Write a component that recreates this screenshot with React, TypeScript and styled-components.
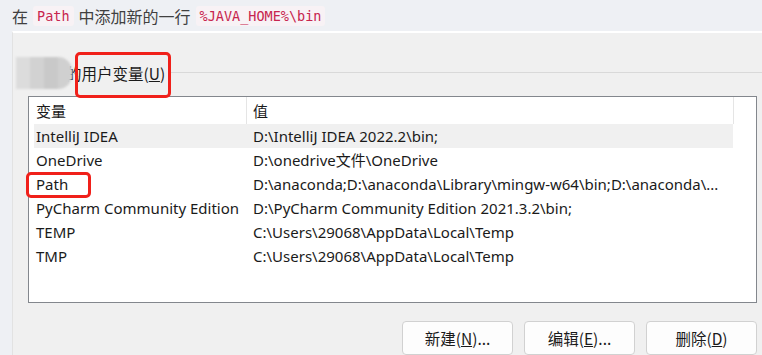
import React, { FC } from "react";
import styled, { createGlobalStyle } from "styled-components";

interface EnvVar {
  name: string;
  value: string;
  marked?: boolean;
}

const vars: EnvVar[] = [
  { name: "IntelliJ IDEA", value: "D:\\IntelliJ IDEA 2022.2\\bin;" },
  { name: "OneDrive", value: "D:\\onedrive文件\\OneDrive" },
  {
    name: "Path",
    value: "D:\\anaconda;D:\\anaconda\\Library\\mingw-w64\\bin;D:\\anaconda\\...",
    marked: true,
  },
  { name: "PyCharm Community Edition", value: "D:\\PyCharm Community Edition 2021.3.2\\bin;" },
  { name: "TEMP", value: "C:\\Users\\29068\\AppData\\Local\\Temp" },
  { name: "TMP", value: "C:\\Users\\29068\\AppData\\Local\\Temp" },
];

const App: FC = () => {
  return (
    <>
      <GlobalStyle />
      <Page>
        <Caption>
          在<Code>Path</Code>中添加新的一行<Code>%JAVA_HOME%\bin</Code>
        </Caption>
        <Shot>
          <TabRow>
            <Mosaic>
              <Tile $c="#dcdcdc" />
              <Tile $c="#d2d2d2" />
              <Tile $c="#c9c9c9" />
              <Tile $c="#d0d0d0" $end />
            </Mosaic>
            <TabLabel>
              的用户变量(<u>U</u>)
              <RedBox $left={9} $top={-10} $w={96} $h={46} />
            </TabLabel>
            <TabLine />
          </TabRow>

          <ListBox>
            <Header>
              <HeadCell>变量</HeadCell>
              <HeadSep />
              <HeadCell $second>值</HeadCell>
              <HeadSep />
            </Header>
            <Rows>
              {vars.map((v, i) => (
                <Row key={v.name} $selected={i === 0}>
                  <Cell>
                    {v.name}
                    {v.marked && <RedBox $left={-8} $top={0} $w={65} $h={26} />}
                  </Cell>
                  <Cell $second>{v.value}</Cell>
                </Row>
              ))}
            </Rows>
          </ListBox>

          <Buttons>
            <Button>
              新建(<u>N</u>)...
            </Button>
            <Button>
              编辑(<u>E</u>)...
            </Button>
            <Button>
              删除(<u>D</u>)
            </Button>
          </Buttons>
        </Shot>
      </Page>
    </>
  );
};

export default App;

//---------------------------------styled component-----------------------------------
const GlobalStyle = createGlobalStyle`
  body {
    margin: 0;
    background: #eef0f4;
    overflow: hidden;
  }
`;

const Page = styled.div`
  width: 762px;
  height: 355px;
  overflow: hidden;
  display: flex;
  flex-direction: column;
  font-family: "Segoe UI", "Noto Sans", "Noto Sans CJK SC", sans-serif;
`;

const Caption = styled.div`
  height: 32px;
  display: flex;
  align-items: center;
  gap: 5px;
  padding: 0 0 0 12px;
  font-size: 16px;
  color: #404040;
  font-family: "Noto Sans CJK SC", sans-serif;
`;

const Code = styled.code`
  font-family: "DejaVu Sans Mono", "Liberation Mono", monospace;
  font-size: 13.5px;
  color: #c7254e;
  background: #f8f2f5;
  padding: 2px 4px;
  border-radius: 3px;
  line-height: 16px;
`;

const Shot = styled.div`
  flex: 1;
  margin-left: 12px;
  border-top: 2px solid #ffffff;
  border-left: 1px solid #e2e2e2;
  background: #f0f0f0;
  display: flex;
  flex-direction: column;
`;

const TabRow = styled.div`
  display: flex;
  align-items: center;
  height: 32px;
  margin: 24px 0 7px 3px;
`;

const Mosaic = styled.div`
  display: flex;
  height: 32px;
  width: 56px;
  margin-right: -6px;
  position: relative;
  z-index: 1;
  filter: blur(1px);
`;

const Tile = styled.div<{ $c: string; $end?: boolean }>`
  flex: 1;
  background: ${(p) => p.$c};
  border-radius: ${(p) => (p.$end ? "0 14px 14px 0" : "0")};
`;

const TabLabel = styled.span`
  position: relative;
  font-size: 15.5px;
  color: #1a1a1a;
  font-family: "Noto Sans CJK SC", sans-serif;
  padding-right: 4px;
`;

const TabLine = styled.div`
  flex: 1;
  height: 1px;
  background: #d9d9d9;
  margin-top: -2px;
`;

const RedBox = styled.div<{ $left: number; $top: number; $w: number; $h: number }>`
  position: absolute;
  left: ${(p) => p.$left}px;
  top: ${(p) => p.$top}px;
  width: ${(p) => p.$w}px;
  height: ${(p) => p.$h}px;
  box-sizing: border-box;
  border: 3px solid #f0201a;
  border-radius: 5px;
  pointer-events: none;
`;

const ListBox = styled.div`
  margin-left: 15px;
  width: 727px;
  height: 205px;
  border: 1px solid #83878d;
  background: #ffffff;
  display: flex;
  flex-direction: column;
`;

const Header = styled.div`
  display: grid;
  grid-template-columns: 217px 1px 486px 1px;
  height: 27px;
  align-items: center;
`;

const HeadCell = styled.div<{ $second?: boolean }>`
  padding-left: ${(p) => (p.$second ? 6 : 7)}px;
  font-size: 15px;
  color: #1a1a1a;
  font-family: "Noto Sans CJK SC", sans-serif;
`;

const HeadSep = styled.div`
  height: 27px;
  background: #e5e5e5;
`;

const Rows = styled.div`
  display: flex;
  flex-direction: column;
  margin-left: 5px;
  width: 699px;
`;

const Row = styled.div<{ $selected?: boolean }>`
  display: grid;
  grid-template-columns: 212px 1fr;
  height: 24px;
  align-items: center;
  background: ${(p) => (p.$selected ? "#f0f0f0" : "transparent")};
`;

const Cell = styled.div<{ $second?: boolean }>`
  position: relative;
  height: 24px;
  line-height: 24px;
  padding-left: ${(p) => (p.$second ? 7 : 2)}px;
  font-size: 15px;
  color: #1a1a1a;
  white-space: nowrap;
  overflow: ${(p) => (p.$second ? "hidden" : "visible")};
`;

const Buttons = styled.div`
  display: flex;
  justify-content: flex-end;
  gap: 11px;
  margin: 18px 5px 0 0;
`;

const Button = styled.button`
  width: 111px;
  height: 34px;
  border: 1px solid #d1d1d1;
  border-radius: 4px;
  background: #fdfdfd;
  font-size: 15.5px;
  color: #1a1a1a;
  font-family: "Noto Sans CJK SC", sans-serif;
  padding: 0;
`;
